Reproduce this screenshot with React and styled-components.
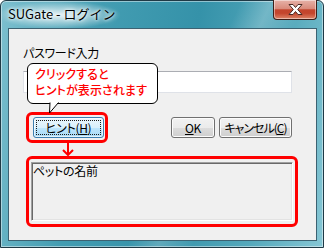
import React from "react";
import styled, { createGlobalStyle } from "styled-components";

const GlobalStyle = createGlobalStyle`
  html, body { margin: 0; padding: 0; background: #fff; }
  body { font-family: "Noto Sans CJK JP", "Noto Sans", sans-serif; }
  * { box-sizing: border-box; }
`;

const Window = styled.div`
  position: relative;
  width: 324px;
  height: 248px;
  display: flex;
  flex-direction: column;
  border: 1px solid #1f3a46;
  border-radius: 6px 6px 0 0;
  padding: 0 6px 6px 7px;
  background:
    radial-gradient(ellipse 62px 14px at 58px 14px, rgba(255,255,255,0.85), rgba(255,255,255,0) 100%),
    linear-gradient(115deg, rgba(255,255,255,0) 0%, rgba(255,255,255,0) 55%, rgba(255,255,255,0.22) 62%, rgba(255,255,255,0) 70%),
    linear-gradient(100deg, #7dc0cf 0%, #439db2 28%, #3592a9 55%, #55a9bc 80%, #86c7d5 100%);
  box-shadow: inset 0 0 0 1px rgba(255,255,255,0.45);
`;

const TitleBar = styled.div`
  height: 27px;
  display: flex;
  align-items: flex-start;
`;

const Title = styled.div`
  padding-top: 4px;
  font-size: 13px;
  line-height: 18px;
  color: #000;
  text-shadow: 0 0 6px #fff, 0 0 3px #fff;
`;

const CloseButton = styled.div`
  margin-left: auto;
  margin-top: -1px;
  width: 44px;
  height: 20px;
  border: 1px solid #3d1f19;
  border-top: none;
  border-radius: 0 0 4px 4px;
  display: flex;
  align-items: center;
  justify-content: center;
  background: linear-gradient(#e6b2a8 0%, #d98b7c 45%, #c3452d 52%, #c4462d 70%, #dd8568 100%);
  box-shadow: inset 0 0 0 1px rgba(255,255,255,0.45);
`;

const Client = styled.div`
  position: relative;
  flex: 1;
  border: 1px solid #3c6272;
  background: #f0f0f0;
  display: flex;
  flex-direction: column;
  padding: 17px 0 0 14px;
  font-size: 12px;
  line-height: 14px;
  color: #000;
  font-feature-settings: "palt";
`;

const Label = styled.div`
  height: 14px;
  letter-spacing: -0.3px;
`;

const PasswordInput = styled.div`
  margin-top: 11px;
  width: 269px;
  height: 22px;
  background: #fff;
  border: 1px solid #dfe2e8;
  border-top-color: #abadb3;
`;

const ButtonRow = styled.div`
  margin-top: 19px;
  width: 269px;
  display: flex;
  align-items: center;
`;

const Highlight = styled.div`
  margin-left: 3px;
  border: 3px solid #ff0000;
  border-radius: 6px;
  padding: ${(p) => p.$pad};
  width: ${(p) => p.$w}px;
`;

const Button = styled.div`
  width: ${(p) => p.$w}px;
  height: 21px;
  border-radius: 3px;
  border: 1px solid ${(p) => (p.$focused ? "#3c7fb1" : "#707070")};
  background: ${(p) =>
    p.$focused
      ? "linear-gradient(#eaf6fd 0%, #d9f0fc 50%, #bee6fd 50%, #a7d9f5 100%)"
      : "linear-gradient(#f2f2f2 0%, #ebebeb 50%, #dddddd 50%, #cfcfcf 100%)"};
  box-shadow: inset 0 0 0 1px ${(p) => (p.$focused ? "rgba(255,255,255,0.7)" : "#fcfcfc")};
  display: flex;
  align-items: stretch;
  padding: 2px;
`;

const FocusRect = styled.div`
  flex: 1;
  display: flex;
  align-items: center;
  justify-content: center;
  border: 1px ${(p) => (p.$on ? "dotted #1a1a1a" : "solid transparent")};
  letter-spacing: ${(p) => (p.$tight ? "-1px" : "-0.3px")};
  white-space: nowrap;
`;

const RightButtons = styled.div`
  margin-left: auto;
  display: flex;
  gap: 4px;
`;

const ArrowRow = styled.div`
  height: 13px;
  padding-left: 39px;
  display: flex;
`;

const HintBox = styled.div`
  height: 59px;
  border-style: solid;
  border-width: 1px;
  border-color: #a0a0a0 #ffffff #ffffff #a0a0a0;
  box-shadow: inset 1px 1px 0 #696969, inset -1px -1px 0 #e3e3e3;
  padding: 1px 1px;
  letter-spacing: -0.3px;
`;

const Callout = styled.div`
  position: absolute;
  left: 18px;
  top: 34px;
  width: 131px;
  height: 41px;
  background: #fff;
  border: 1px solid #000;
  border-radius: 6px;
  padding: 2px 0 0 7px;
  color: #ff0000;
  font-size: 12px;
  font-weight: 500;
  line-height: 16px;
  letter-spacing: 0.1px;
  white-space: nowrap;
`;

const Tail = styled.svg`
  position: absolute;
  left: 20px;
  top: 38px;
  overflow: visible;
`;

const Key = styled.span`
  text-decoration: underline;
  text-underline-offset: 1px;
`;

export default function App() {
  return (
    <>
      <GlobalStyle />
      <Window>
        <TitleBar>
          <Title>SUGate - ログイン</Title>
          <CloseButton>
            <svg width="15" height="11" viewBox="-0.5 -0.5 14 11">
              <polygon
                points="0,0 4,0 6.5,3 9,0 13,0 8.7,5 13,10 9,10 6.5,7 4,10 0,10 4.3,5"
                fill="#fff"
                stroke="#4a2a24"
                strokeWidth="1"
                strokeLinejoin="round"
              />
            </svg>
          </CloseButton>
        </TitleBar>
        <Client>
          <Label>パスワード入力</Label>
          <PasswordInput />
          <ButtonRow>
            <Highlight $w={82} $pad="2px 1px 2px 4px">
              <Button $w={71} $focused>
                <FocusRect $on>
                  ヒント(<Key>H</Key>)
                </FocusRect>
              </Button>
            </Highlight>
            <RightButtons>
              <Button $w={44}>
                <FocusRect>
                  <Key>O</Key>K
                </FocusRect>
              </Button>
              <Button $w={73}>
                <FocusRect $tight>
                  キャンセル(<Key>C</Key>)
                </FocusRect>
              </Button>
            </RightButtons>
          </ButtonRow>
          <ArrowRow>
            <svg width="12" height="13" viewBox="0 0 12 13">
              <path d="M6 0 V12 M1 7 L6 12 L11 7" fill="none" stroke="#ff0000" strokeWidth="2" />
            </svg>
          </ArrowRow>
          <Highlight $w={272} $pad="3px 2px">
            <HintBox>ペットの名前</HintBox>
          </Highlight>
          <Callout>
            クリックすると
            <br />
            ヒントが表示されます
            <Tail width="12" height="12" viewBox="0 0 12 12">
              <polygon points="2,0 1.5,11 10.5,0" fill="#fff" />
              <polyline points="2,0.5 1.5,11 10.5,0.5" fill="none" stroke="#000" strokeWidth="1" />
            </Tail>
          </Callout>
        </Client>
      </Window>
    </>
  );
}
